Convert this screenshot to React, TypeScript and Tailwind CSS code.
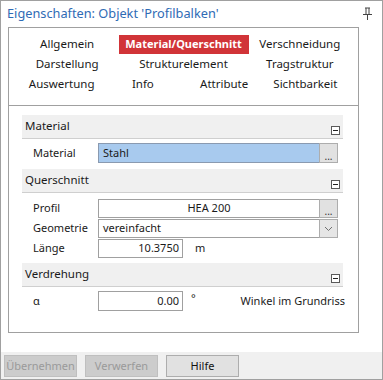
import React from 'react';

const font = { fontFamily: '"Noto Sans", "Open Sans", sans-serif' };

function Collapse() {
  return (
    <div className="w-[9px] h-[9px] border border-[#5a5a5a] bg-white flex items-center justify-center self-end mb-[3px] mr-[1px]">
      <div className="w-[5px] h-[1px] bg-[#222]" />
    </div>
  );
}

function GroupHeader({ title }: { title: string }) {
  return (
    <div className="h-[24px] bg-[#f0f0f0] border-b border-[#cfcfcf] flex justify-between pl-[3px] pr-[2px]">
      <span className="self-center text-[11.5px] text-[#1a1a1a] -mt-[2px]">{title}</span>
      <Collapse />
    </div>
  );
}

function DotsButton() {
  return (
    <div className="w-[19px] h-full bg-[#e1e1e1] border border-[#adadad] -ml-[1px] flex items-end justify-center pb-[1px] text-[10px] leading-none text-[#333]">
      ...
    </div>
  );
}

function ChevronButton() {
  return (
    <div className="w-[19px] h-full bg-[#e6e6e6] border border-[#adadad] -ml-[1px] flex items-center justify-center">
      <svg width="9" height="6" viewBox="0 0 9 6">
        <path d="M1 1 L4.5 4.5 L8 1" fill="none" stroke="#707070" strokeWidth="1" />
      </svg>
    </div>
  );
}

export default function App() {
  return (
    <div className="w-[383px] h-[380px] border border-[#a0a0a0] bg-white flex flex-col text-[#1a1a1a]" style={font}>
      {/* title bar */}
      <div className="h-[26px] flex items-center justify-between pl-[6px] pr-[10px]">
        <span className="text-[12.75px] text-[#2f6bb5] -mt-[1px]">Eigenschaften: Objekt 'Profilbalken'</span>
        <svg width="9" height="13" viewBox="0 0 9 13" className="-mt-[2px]">
          <rect x="2" y="0.5" width="5" height="1" fill="#444" />
          <rect x="2.5" y="1" width="1" height="6" fill="#444" />
          <rect x="5.5" y="1" width="1" height="6" fill="#444" />
          <rect x="0" y="7" width="9" height="1" fill="#444" />
          <rect x="4" y="8" width="1" height="5" fill="#444" />
        </svg>
      </div>

      {/* inner panel */}
      <div className="ml-[7px] w-[351px] h-[306px] border border-[#a0a0a0] flex flex-col">
        {/* tabs */}
        <div className="pt-[6px] pb-[11px] border-b border-[#a0a0a0] text-[11.5px]">
          <div className="grid grid-cols-3 h-[20px] items-center text-center">
            <span>Allgemein</span>
            <span className="justify-self-center bg-[#d13438] text-white text-[11px] font-bold h-[19px] w-[130px] flex items-center justify-center">Material/Querschnitt</span>
            <span>Verschneidung</span>
          </div>
          <div className="grid grid-cols-3 h-[20px] items-center text-center">
            <span>Darstellung</span>
            <span>Strukturelement</span>
            <span>Tragstruktur</span>
          </div>
          <div className="grid grid-cols-4 h-[20px] items-center text-center px-[12px]">
            <span>Auswertung</span>
            <span>Info</span>
            <span>Attribute</span>
            <span>Sichtbarkeit</span>
          </div>
        </div>

        {/* property groups */}
        <div className="pt-[9px] pl-[13px] pr-[15px] text-[11px] flex flex-col">
          <GroupHeader title="Material" />
          <div className="flex items-center h-[20px] mt-[4px]">
            <span className="w-[76px] pl-[11px]">Material</span>
            <div className="flex-1 h-full bg-[#a8caee] border border-[#8a9ab0] flex items-center pl-[4px]">Stahl</div>
            <DotsButton />
            <div className="w-[5px]" />
          </div>

          <div className="mt-[6px]">
            <GroupHeader title="Querschnitt" />
          </div>
          <div className="flex flex-col gap-[1px] mt-[6px]">
            <div className="flex items-center h-[19px]">
              <span className="w-[76px] pl-[11px]">Profil</span>
              <div className="flex-1 h-full border border-[#a0a0a0] flex items-center justify-center">HEA 200</div>
              <DotsButton />
              <div className="w-[5px]" />
            </div>
            <div className="flex items-center h-[19px]">
              <span className="w-[76px] pl-[11px]">Geometrie</span>
              <div className="flex-1 h-full border border-[#a0a0a0] flex items-center pl-[4px]">vereinfacht</div>
              <ChevronButton />
              <div className="w-[5px]" />
            </div>
            <div className="flex items-center h-[19px]">
              <span className="w-[76px] pl-[11px]">Länge</span>
              <div className="w-[85px] h-full border border-[#a0a0a0] flex items-center justify-end pr-[3px]">10.3750</div>
              <span className="ml-[12px]">m</span>
            </div>
          </div>

          <div className="mt-[5px]">
            <GroupHeader title="Verdrehung" />
          </div>
          <div className="flex items-center h-[20px] mt-[4px]">
            <span className="w-[76px] pl-[11px]">α</span>
            <div className="w-[85px] h-full border border-[#a0a0a0] flex items-center justify-end pr-[3px]">0.00</div>
            <span className="ml-[8px] self-start text-[11px] leading-[14px]">°</span>
            <span className="ml-auto -mr-[2px]">Winkel im Grundriss</span>
          </div>
        </div>
      </div>

      <div className="flex-1" />

      {/* button bar */}
      <div className="h-[27px] bg-[#f0f0f0] flex items-start pt-[3px] pl-[3px] gap-[8px] text-[11px]">
        <div className="w-[73px] h-[22px] bg-[#cccccc] border border-[#bfbfbf] text-[#9a9a9a] flex items-center justify-center">Übernehmen</div>
        <div className="w-[73px] h-[22px] bg-[#cccccc] border border-[#bfbfbf] text-[#9a9a9a] flex items-center justify-center">Verwerfen</div>
        <div className="w-[73px] h-[22px] bg-[#e1e1e1] border border-[#adadad] text-[#111] flex items-center justify-center">Hilfe</div>
      </div>
    </div>
  );
}
